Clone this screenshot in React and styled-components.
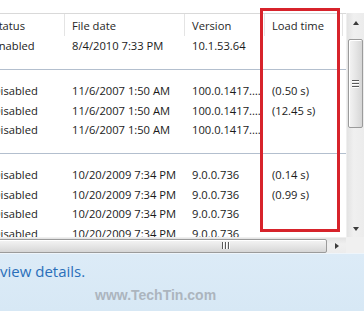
import React from 'react'
import styled, { createGlobalStyle } from 'styled-components'

const GlobalStyle = createGlobalStyle`
  html, body {
    margin: 0;
    padding: 0;
    background: #fff;
  }
  body {
    width: 364px;
    height: 311px;
    overflow: hidden;
    font-family: "Open Sans", "Liberation Sans", sans-serif;
  }
`

const Window = styled.div`
  position: relative;
  width: 364px;
  height: 311px;
  display: flex;
  flex-direction: column;
  background: #fff;
`

const TopGap = styled.div`
  height: 13px;
  flex: none;
`

const Frame = styled.div`
  display: grid;
  grid-template-columns: 1fr 18px;
  grid-template-rows: 224px 16px;
  flex: none;
`

const Viewport = styled.div`
  border-top: 1px solid #d9d9d9;
  overflow: hidden;
  position: relative;
`

const List = styled.div`
  margin-left: -14.5px;
  width: 372px;
  font-size: 11.2px;
  color: #1b1b1b;
`

const Row = styled.div`
  display: grid;
  grid-template-columns: 79.5px 120px 80px 78px 1fr;
  height: 19.5px;
  line-height: 19.5px;
`

const HeaderRow = styled(Row)`
  box-sizing: border-box;
  height: 22px;
  padding-top: 2px;
  line-height: 20px;
`

const HeadCell = styled.div`
  padding-left: 7px;
  border-right: 1px solid #e4e4e4;
  margin-top: -2px;
  padding-top: 2px;
  color: #262626;
  white-space: nowrap;
  overflow: hidden;
`

const Cell = styled.div`
  padding-left: 7px;
  padding-right: 2px;
  white-space: nowrap;
  overflow: hidden;
  text-overflow: ellipsis;
`

const Separator = styled.div`
  height: 1px;
  background: #b3bfce;
  margin: ${p => p.$top}px 0 ${p => p.$bottom}px 0;
`

const VScroll = styled.div`
  display: flex;
  flex-direction: column;
  background: linear-gradient(to right, #e3e3e3, #f0f0f0 40%, #ececec);
  border-left: 1px solid #efefef;
  padding-top: 1px;
`

const ArrowButton = styled.div`
  height: 17px;
  flex: none;
  display: flex;
  align-items: center;
  justify-content: center;
`

const Triangle = styled.div`
  width: 0;
  height: 0;
  border-style: solid;
  ${p => p.$dir === 'up' && 'border-width: 0 3.5px 4px 3.5px; border-color: transparent transparent #3c3c3c transparent;'}
  ${p => p.$dir === 'down' && 'border-width: 4px 3.5px 0 3.5px; border-color: #3c3c3c transparent transparent transparent;'}
  ${p => p.$dir === 'right' && 'border-width: 3.5px 0 3.5px 4px; border-color: transparent transparent transparent #3c3c3c;'}
`

const VTrack = styled.div`
  flex: 1;
  padding-top: 8px;
`

const VThumb = styled.div`
  height: 87px;
  margin: 0 1px 0 1px;
  border: 1px solid #9b9b9b;
  border-radius: 2px;
  background: linear-gradient(to right, #f4f4f4, #e6e6e6 50%, #d6d6d6);
  box-shadow: inset 1px 1px 0 #fff;
  display: flex;
  flex-direction: column;
  align-items: center;
  justify-content: center;
  gap: 2px;
`

const GripLine = styled.div`
  width: ${p => (p.$vertical ? '1px' : '7px')};
  height: ${p => (p.$vertical ? '7px' : '1px')};
  background: #5a5a5a;
  box-shadow: ${p => (p.$vertical ? '1px 0 0 #fff' : '0 1px 0 #fff')};
`

const HScroll = styled.div`
  display: flex;
  align-items: center;
  background: linear-gradient(to bottom, #e3e3e3, #f0f0f0 40%, #ececec);
  border-top: 1px solid #efefef;
`

const HThumb = styled.div`
  width: 330px;
  height: 14px;
  margin-left: -3px;
  border: 1px solid #9b9b9b;
  border-radius: 2px;
  background: linear-gradient(to bottom, #f4f4f4, #e6e6e6 50%, #d6d6d6);
  box-shadow: inset 1px 1px 0 #fff;
  display: flex;
  align-items: center;
  justify-content: flex-end;
  padding-right: 97px;
  box-sizing: border-box;
  gap: 2px;
`

const HArrow = styled.div`
  flex: 1;
  display: flex;
  align-items: center;
  justify-content: center;
  height: 16px;
`

const Corner = styled.div`
  background: #f0f0f0;
`

const InfoPanel = styled.div`
  flex: 1;
  background: linear-gradient(to bottom, #dcebf7, #d7e8f5);
  border-top: 1px solid #eef5fb;
  display: flex;
  flex-direction: column;
  padding-top: 7px;
`

const DetailsLink = styled.div`
  font-size: 15px;
  line-height: 20px;
  color: #2a6fba;
`

const Watermark = styled.div`
  font-family: "Liberation Sans", Arial, sans-serif;
  font-weight: bold;
  font-size: 14px;
  line-height: 18px;
  color: #acb5be;
  margin-top: 5px;
  padding-left: 95px;
`

const Highlight = styled.div`
  position: absolute;
  left: 260px;
  top: 8px;
  width: 80px;
  height: 224px;
  box-sizing: border-box;
  border: 3px solid #d7232b;
  pointer-events: none;
`

const groups = [
  [['Enabled', '8/4/2010 7:33 PM', '10.1.53.64', '']],
  [
    ['Disabled', '11/6/2007 1:50 AM', '100.0.1417.0022', '(0.50 s)'],
    ['Disabled', '11/6/2007 1:50 AM', '100.0.1417.0022', '(12.45 s)'],
    ['Disabled', '11/6/2007 1:50 AM', '100.0.1417.0022', '']
  ],
  [
    ['Disabled', '10/20/2009 7:34 PM', '9.0.0.736', '(0.14 s)'],
    ['Disabled', '10/20/2009 7:34 PM', '9.0.0.736', '(0.99 s)'],
    ['Disabled', '10/20/2009 7:34 PM', '9.0.0.736', ''],
    ['Disabled', '10/20/2009 7:34 PM', '9.0.0.736', '']
  ]
]

const App = () => {
  return (
    <Window>
      <GlobalStyle />
      <TopGap />
      <Frame>
        <Viewport>
          <List>
            <HeaderRow>
              <HeadCell>Status</HeadCell>
              <HeadCell>File date</HeadCell>
              <HeadCell>Version</HeadCell>
              <HeadCell>Load time</HeadCell>
              <div />
            </HeaderRow>
            {groups.map((rows, g) => (
              <React.Fragment key={g}>
                {g > 0 && <Separator $top={13} $bottom={11.5} />}
                {rows.map((r, i) => (
                  <Row key={i}>
                    {r.map((c, j) => (
                      <Cell key={j}>{c}</Cell>
                    ))}
                    <div />
                  </Row>
                ))}
              </React.Fragment>
            ))}
          </List>
        </Viewport>
        <VScroll>
          <ArrowButton><Triangle $dir="up" /></ArrowButton>
          <VTrack>
            <VThumb>
              <GripLine />
              <GripLine />
              <GripLine />
            </VThumb>
          </VTrack>
          <ArrowButton><Triangle $dir="down" /></ArrowButton>
        </VScroll>
        <HScroll>
          <HThumb>
            <GripLine $vertical />
            <GripLine $vertical />
            <GripLine $vertical />
          </HThumb>
          <HArrow><Triangle $dir="right" /></HArrow>
        </HScroll>
        <Corner />
      </Frame>
      <InfoPanel>
        <DetailsLink>view details.</DetailsLink>
        <Watermark>www.TechTin.com</Watermark>
      </InfoPanel>
      <Highlight />
    </Window>
  )
}

export default App
